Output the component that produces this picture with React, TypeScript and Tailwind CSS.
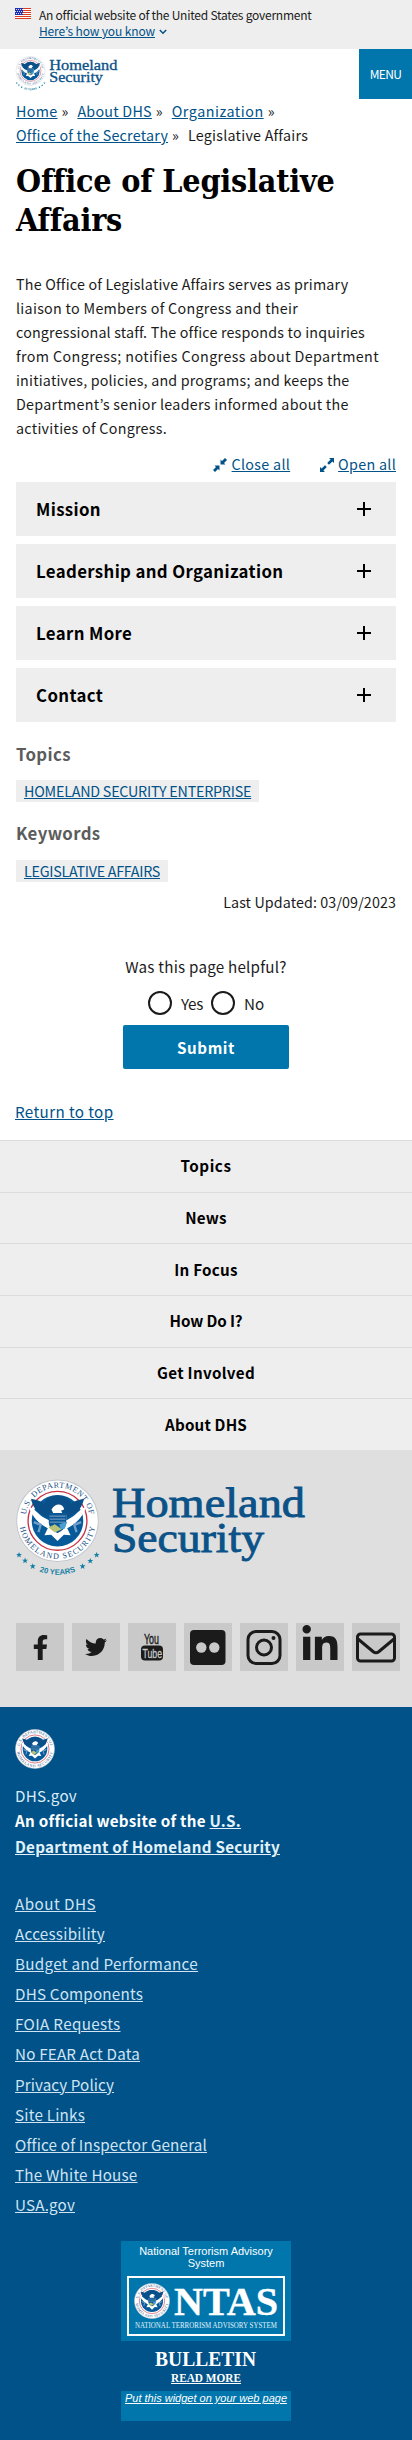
import { FaFacebookF, FaTwitter, FaLinkedinIn } from "react-icons/fa";
import type { ReactNode } from "react";

const star = "M0-9 2.4-2.8 9-2.8 3.7 1.2 5.6 8 0 4-5.6 8-3.7 1.2-9-2.8-2.4-2.8Z";

function Seal({ id, className, years = false }: { id: string; className: string; years?: boolean }) {
  return (
    <svg viewBox={years ? "-127 -125 254 293" : "-125 -125 250 250"} className={className}>
      <defs>
        <path id={id + "t"} d="M-94 16A96 96 0 1 1 94 16" />
        <path id={id + "b"} d="M-114 0A114 114 0 0 0 114 0" />
        <path id={id + "y"} d="M-161 0A161 161 0 0 0 161 0" />
      </defs>
      <circle r="122" fill="#fff" stroke="#c3c8ce" strokeWidth="3" />
      <g fill="#164f86" fontFamily="Liberation Serif, serif" fontSize="24">
        <text>
          <textPath href={"#" + id + "t"} startOffset="34" textLength="272">U.S. DEPARTMENT OF</textPath>
        </text>
        <text>
          <textPath href={"#" + id + "b"} startOffset="19" textLength="320">HOMELAND SECURITY</textPath>
        </text>
      </g>
      <circle r="88" fill="#fff" stroke="#c73449" strokeWidth="4" />
      <circle r="77" fill="#075a9a" />
      <path d="M-79-66C-60-62-49-59-39-50C-35-68-20-76 0-76S35-68 39-50C49-59 60-62 79-66C76-47 66-30 48-20L35-12H-35L-48-20C-66-30-76-47-79-66Z" fill="#0b4f88" />
      <path d="M-85-42C-68-36-57-19-40-9L-24-1V-19L-13-23L-18-34C-12-45-4-49 3-49C12-49 18-44 20-34L11-31L14-23L26-19V-1L40-9C57-19 68-36 85-42C80-18 55 11 29 22L39 43L19 42L0 60L-19 42L-39 43L-29 22C-55 11-80-18-85-42Z" fill="#fff" />
      <path d="M-26-23H26V4C26 20 14 30 0 37C-14 30-26 20-26 4Z" fill="#0b5795" />
      <path d="M-24-14H24M-24-5H24M-23 4H23" stroke="#b7cbe0" strokeWidth="2" />
      <path d="M-27 20-8 10 13 25-8 35Z" fill="#b7c478" />
      <path d="M5 10 29 3 22 23 10 25Z" fill="#4b9fd3" />
      <path d="M-71 4-50 12-57 34M71 4 50 12 57 34" stroke="#6f9fc9" strokeWidth="7" fill="none" />
      {years && (
        <g fill="#167fa5">
          <text fontFamily="Liberation Sans, sans-serif" fontWeight="700" fontSize="23" textAnchor="middle">
            <textPath href={"#" + id + "y"} startOffset="50%">20 YEARS</textPath>
          </text>
          {[[-115, 102], [-97, 119], [-74, 136], [75, 136], [98, 120], [117, 102]].map(([x, y]) => (
            <path key={x} d={star} transform={`translate(${x} ${y})`} />
          ))}
        </g>
      )}
    </svg>
  );
}

function Wordmark({ className }: { className: string }) {
  return (
    <svg viewBox="0 0 194 82" className={className} fill="#0b5288" stroke="#0b5288" strokeWidth=".9" fontFamily="Liberation Serif, serif">
      <text x="0" y="34" fontSize="43" textLength="193" lengthAdjust="spacingAndGlyphs">Homeland</text>
      <text x="0" y="69" fontSize="43" textLength="152" lengthAdjust="spacingAndGlyphs">Security</text>
    </svg>
  );
}

function Link({ children, className = "" }: { children: ReactNode; className?: string }) {
  return <a href="#" className={"text-[#005288] underline underline-offset-1 " + className}>{children}</a>;
}

function Flag() {
  return (
    <svg viewBox="0 0 16 11" className="mt-2 h-[11px] w-4 shrink-0">
      <rect width="16" height="11" fill="#fff" />
      <path d="M0 .5H16M0 2.5H16M0 4.5H16M0 6.5H16M0 8.5H16M0 10.5H16" stroke="#db3e1f" strokeWidth="1" />
      <rect width="8" height="7" fill="#1e33b1" />
      <path d="M1 1.5H8M0 3.5H8M1 5.5H8" stroke="#fff" strokeWidth=".8" strokeDasharray="1 1" />
    </svg>
  );
}

function Tag({ children, className }: { children: ReactNode; className: string }) {
  return (
    <div className="flex">
      <span className="h-[22px] bg-[#eee] px-2 text-[14.3px] leading-[21px]"><Link className={className}>{children}</Link></span>
    </div>
  );
}

const crumbs = [
  ["Home", "tracking-[0.32px]"],
  ["About DHS", "tracking-[0.25px]"],
  ["Organization", "tracking-[0.54px]"],
  ["Office of the Secretary", "tracking-[0.22px]"],
];

const intro = [
  ["The Office of Legislative Affairs serves as primary", "tracking-[0.2px]"],
  ["liaison to Members of Congress and their", "tracking-[0.29px]"],
  ["congressional staff. The office responds to inquiries", "tracking-[0.18px]"],
  ["from Congress; notifies Congress about Department", "tracking-[0.38px]"],
  ["initiatives, policies, and programs; and keeps the", "tracking-[0.19px]"],
  ["Department’s senior leaders informed about the", "tracking-[0.28px]"],
  ["activities of Congress.", "tracking-[0.27px]"],
];

const sections = ["Mission", "Leadership and Organization", "Learn More", "Contact"];

const footerNav = [
  ["Topics", "tracking-[0.55px]"],
  ["News", "tracking-[0.18px]"],
  ["In Focus", "tracking-[0.25px]"],
  ["How Do I?", "tracking-[-0.12px]"],
  ["Get Involved", "tracking-[0.31px]"],
  ["About DHS", "tracking-[0.18px]"],
];

const footerLinks = [
  ["About DHS", "tracking-[0.47px]"],
  ["Accessibility", "tracking-[0.27px]"],
  ["Budget and Performance", "tracking-[0.32px]"],
  ["DHS Components", "tracking-[0.2px]"],
  ["FOIA Requests", "tracking-[0.35px]"],
  ["No FEAR Act Data", "tracking-[0.2px]"],
  ["Privacy Policy", "tracking-[0.1px]"],
  ["Site Links", "tracking-[0.23px]"],
  ["Office of Inspector General", "tracking-[0.18px]"],
  ["The White House", "tracking-[0.22px]"],
  ["USA.gov", "tracking-[0.19px]"],
];

const social: { name: string; icon: ReactNode }[] = [
  { name: "Facebook", icon: <FaFacebookF className="h-[25px] w-[25px]" /> },
  { name: "Twitter", icon: <FaTwitter className="h-[22px] w-[22px]" /> },
  {
    name: "YouTube",
    icon: (
      <svg viewBox="0 0 48 48" className="h-12 w-12" fontFamily="Liberation Sans, sans-serif">
        <text x="16" y="21" fontSize="14" textLength="15" lengthAdjust="spacingAndGlyphs" fill="#1b1b1b" stroke="#1b1b1b" strokeWidth=".4">You</text>
        <rect x="13" y="22.5" width="22" height="15" rx="4" fill="#1b1b1b" />
        <text x="14.5" y="34.8" fontSize="13" textLength="19.5" lengthAdjust="spacingAndGlyphs" fill="#c9c9c9" stroke="#c9c9c9" strokeWidth=".3">Tube</text>
      </svg>
    ),
  },
  {
    name: "Flickr",
    icon: (
      <svg viewBox="0 0 48 48" className="h-12 w-12">
        <rect x="6" y="7" width="35.5" height="35" rx="4" fill="#1b1b1b" />
        <circle cx="17.3" cy="24.5" r="5.2" fill="#c9c9c9" />
        <circle cx="30.3" cy="24.5" r="5.2" fill="#c9c9c9" />
      </svg>
    ),
  },
  {
    name: "Instagram",
    icon: (
      <svg viewBox="0 0 48 48" className="h-12 w-12" fill="none" stroke="#1b1b1b" strokeWidth="3">
        <rect x="8" y="8.5" width="32" height="32" rx="8" />
        <circle cx="24" cy="24.5" r="7.5" />
        <circle cx="33.5" cy="15" r="2" fill="#1b1b1b" stroke="none" />
      </svg>
    ),
  },
  { name: "LinkedIn", icon: <FaLinkedinIn className="mt-[-4px] h-10 w-10" /> },
  {
    name: "Email",
    icon: (
      <svg viewBox="0 0 48 48" className="h-12 w-12" fill="none" stroke="#1b1b1b" strokeWidth="3">
        <rect x="5.5" y="11" width="37" height="27" rx="3" />
        <path d="M6 16 21 28.5Q24 31 27 28.5L42 16" />
      </svg>
    ),
  },
];

export default function App() {
  return (
    <div className="flex h-[2440px] w-[412px] flex-col overflow-hidden bg-white font-['Noto_Sans_CJK_KR',sans-serif] text-[14.3px] leading-6 text-[#1b1b1b]">
      <section className="flex h-[49px] gap-2 bg-[#eee] pl-[15px] text-[12px] leading-4">
        <Flag />
        <div className="pt-[7px]">
          <p className="tracking-[-0.24px]">An official website of the United States government</p>
          <p className="flex items-center gap-1">
            <Link className="tracking-[-0.13px]">Here’s how you know</Link>
            <svg viewBox="0 0 8 6" className="mt-0.5 h-1.5 w-2" fill="none" stroke="#005288" strokeWidth="1.5"><path d="M.8 1 4 4.2 7.2 1" /></svg>
          </p>
        </div>
      </section>

      <header className="flex h-[50px] justify-between">
        <div className="flex pl-[15px] pt-[7px]">
          <Seal id="h" years className="h-[35px] w-[31px]" />
          <Wordmark className="ml-[3px] mt-[2px] h-[29px] w-[69px]" />
        </div>
        <button className="h-[50px] w-[53px] bg-[#0076ad] text-[12px] tracking-[-0.6px] text-white">MENU</button>
      </header>

      <main className="flex h-[1041px] flex-col px-4">
        <nav className="flex h-[60px] flex-wrap content-start">
          {crumbs.map(([t, tracking]) => (
            <span key={t} className="mr-[9px] whitespace-nowrap"><Link className={tracking}>{t}</Link><span className="ml-1">»</span></span>
          ))}
          <span className="tracking-[0.25px]">Legislative Affairs</span>
        </nav>
        <h1 className="h-[112px] pt-[3px] font-['DejaVu_Serif_Condensed','DejaVu_Serif',serif] text-[32px] font-bold leading-[38.5px] tracking-[-0.2px] text-black [font-stretch:condensed]">
          Office of Legislative<br />Affairs
        </h1>
        <p className="mt-px h-[168px] whitespace-nowrap">
          {intro.map(([line, tracking]) => (
            <span key={line} className={"block " + tracking}>{line}</span>
          ))}
        </p>
        <div className="mt-[12px] flex h-[30px] justify-end gap-[30px]">
          <span className="flex gap-[5px]">
            <svg viewBox="0 0 14 14" className="mt-1.5 h-3.5 w-3.5 fill-[#005288]"><path d="M7.5 1.5 9 3 12 0 14 2 11 5 12.5 6.5H7.5ZM1.5 7.5H6.5V12.5L5 11 2 14 0 12 3 9Z" /></svg>
            <Link className="tracking-[0.3px]">Close all</Link>
          </span>
          <span className="flex gap-1">
            <svg viewBox="0 0 14 14" className="mt-1.5 h-3.5 w-3.5 fill-[#005288]"><path d="M9 0H14V5L12.4 3.4 9 6.8 7.2 5 10.6 1.6ZM0 9 1.6 10.6 5 7.2 6.8 9 3.4 12.4 5 14H0Z" /></svg>
            <Link className="tracking-[0.3px]">Open all</Link>
          </span>
        </div>
        <div className="flex flex-col gap-2">
          {sections.map((t) => (
            <button key={t} className="flex h-[54px] items-center justify-between bg-[#eee] pl-5 pr-[25px] text-left text-[16.8px] font-bold tracking-[0.37px] text-black">
              {t}
              <svg viewBox="0 0 14 14" className="h-3.5 w-3.5" stroke="#000" strokeWidth="2"><path d="M7 0V14M0 7H14" /></svg>
            </button>
          ))}
        </div>
        <h2 className="mt-[20px] h-[38px] text-[16.8px] font-bold tracking-[0.38px] text-[#5c5c5c]">Topics</h2>
        <Tag className="tracking-[-0.23px]">HOMELAND SECURITY ENTERPRISE</Tag>
        <h2 className="mt-[19px] h-[39px] text-[16.8px] font-bold tracking-[0.36px] text-[#5c5c5c]">Keywords</h2>
        <Tag className="tracking-[-0.27px]">LEGISLATIVE AFFAIRS</Tag>
        <p className="mt-[8px] text-right tracking-[0.1px]">Last Updated: 03/09/2023</p>
        <p className="mt-[40px] text-center text-[15.2px] tracking-[0.22px]">Was this page helpful?</p>
        <div className="mt-[13px] flex h-6 items-center pl-[132px] text-[15.2px]">
          <span className="h-6 w-6 rounded-full border-2 border-[#1b1b1b]" />
          <span className="ml-[9px] w-[30px] tracking-[-0.3px]">Yes</span>
          <span className="h-6 w-6 rounded-full border-2 border-[#1b1b1b]" />
          <span className="ml-[9px]">No</span>
        </div>
        <button className="mx-auto mt-[10px] h-11 w-[166px] rounded-[2px] bg-[#0076ad] pb-px text-[15.2px] font-bold tracking-[0.57px] text-white">Submit</button>
        <p className="ml-[-1px] mt-[30px] text-[15.2px]"><Link className="tracking-[0.39px]">Return to top</Link></p>
      </main>

      <nav className="grid h-[310px] shrink-0 grid-rows-6 bg-[#eee] text-center text-[15.2px] font-bold text-black">
        {footerNav.map(([t, tracking]) => (
          <a key={t} href="#" className={"flex items-center justify-center border-t border-[#dcdcdc] pb-[2px] " + tracking}>{t}</a>
        ))}
      </nav>

      <section className="h-[257px] shrink-0 bg-[#dfdfdf] pl-4">
        <div className="flex pt-[29px]">
          <Seal id="f" years className="ml-[-1px] h-[98px] w-[85px]" />
          <Wordmark className="ml-[12px] mt-[4px] h-[82px] w-[194px]" />
        </div>
        <div className="mt-[46px] flex gap-2 text-[#1b1b1b]">
          {social.map((s) => (
            <a key={s.name} href="#" className="flex h-12 w-12 shrink-0 items-center justify-center bg-[#c9c9c9]">{s.icon}</a>
          ))}
        </div>
      </section>

      <footer className="h-[733px] shrink-0 bg-[#005288] pl-[15px] text-[15.2px] text-white">
        <div className="h-[75px] pt-[22px]"><Seal id="s" className="h-10 w-10" /></div>
        <p className="h-[25px] leading-[26px] tracking-[0.26px] text-[#dcecf7]">DHS.gov</p>
        <p className="h-[52px] font-bold leading-[26px] tracking-[0.28px]">An official website of the <a href="#" className="text-[#e3f2fa] underline underline-offset-1">U.S.<br />Department of Homeland Security</a></p>
        <ul className="mt-[29px]">
          {footerLinks.map(([t, tracking]) => (
            <li key={t} className="h-[30.1px] leading-[30px]"><a href="#" className={"text-[#d0e4f3] underline underline-offset-1 " + tracking}>{t}</a></li>
          ))}
        </ul>
        <div className="ml-[106px] mt-[22px] flex w-[170px] flex-col items-center">
          <div className="h-[100px] w-[170px] bg-[#0076ad] pt-[4px] text-center font-['Liberation_Sans',sans-serif] text-[11px] leading-[12px]">
            National Terrorism Advisory<br />System
            <div className="mx-auto mt-[7px] flex h-[60px] w-[158px] flex-col border-2 border-white">
              <div className="flex h-[42px] items-center pl-[5px] pt-1">
                <Seal id="n" className="h-9 w-9" />
                <svg viewBox="0 0 106 36" className="ml-1 h-9 w-[106px]"><text x="0" y="32" fill="#fff" stroke="#fff" strokeWidth=".4" fontFamily="Liberation Serif, serif" fontWeight="700" fontSize="40" textLength="104" lengthAdjust="spacingAndGlyphs">NTAS</text></svg>
              </div>
              <svg viewBox="0 0 154 12" className="h-3 w-[154px]"><text x="6" y="7.5" fill="#e3f2fa" fontFamily="Liberation Serif, serif" fontSize="8" textLength="142" lengthAdjust="spacingAndGlyphs">NATIONAL TERRORISM ADVISORY SYSTEM</text></svg>
            </div>
          </div>
          <svg viewBox="0 0 170 50" className="h-[50px] w-[170px]" fill="#fff" fontFamily="Liberation Serif, serif" fontWeight="700">
            <text x="34" y="25" fontSize="22" textLength="101" lengthAdjust="spacingAndGlyphs">BULLETIN</text>
            <text x="50" y="40.5" fontSize="12.5" textLength="70" lengthAdjust="spacingAndGlyphs">READ MORE</text>
            <path d="M50 42.5h70" stroke="#fff" />
          </svg>
          <div className="h-[30px] w-[170px] whitespace-nowrap bg-[#0076ad] text-center font-['Liberation_Sans',sans-serif] text-[11px] italic leading-[15px] underline">Put this widget on your web page</div>
        </div>
      </footer>
    </div>
  );
}
